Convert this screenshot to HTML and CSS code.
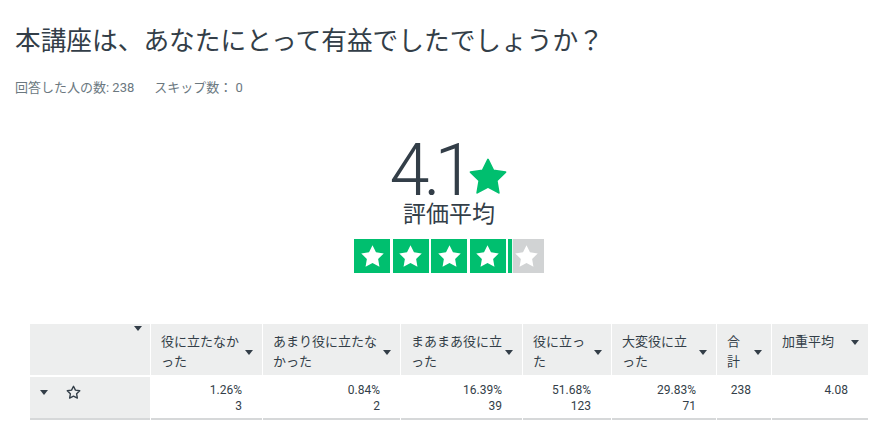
FILE: index.html
```html
<!DOCTYPE html>
<html lang="ja">
<head>
    <meta charset="UTF-8">
    <meta name="viewport" content="width=device-width, initial-scale=1.0">
    <title>評価の結果</title>
    <link rel="stylesheet" href="styles.css">
</head>
<body>
    <div class="page">
        <h1 class="question">本講座は、あなたにとって有益でしたでしょうか？</h1>
        <p class="meta"><span>回答した人の数: 238</span><span>スキップ数： 0</span></p>

        <div class="rating">
            <div class="score">
                <span class="score-value">4.1</span>
                <svg class="score-star" viewBox="0 0 24 24"><polygon points="12,2 15.09,8.26 22,9.27 17,14.14 18.18,21.02 12,17.77 5.82,21.02 7,14.14 2,9.27 8.91,8.26"/></svg>
            </div>
            <div class="score-label">評価平均</div>
            <div class="stars">
                <div class="star-box"><svg viewBox="0 0 24 24"><polygon points="12,2 15.09,8.26 22,9.27 17,14.14 18.18,21.02 12,17.77 5.82,21.02 7,14.14 2,9.27 8.91,8.26"/></svg></div>
                <div class="star-box"><svg viewBox="0 0 24 24"><polygon points="12,2 15.09,8.26 22,9.27 17,14.14 18.18,21.02 12,17.77 5.82,21.02 7,14.14 2,9.27 8.91,8.26"/></svg></div>
                <div class="star-box"><svg viewBox="0 0 24 24"><polygon points="12,2 15.09,8.26 22,9.27 17,14.14 18.18,21.02 12,17.77 5.82,21.02 7,14.14 2,9.27 8.91,8.26"/></svg></div>
                <div class="star-box"><svg viewBox="0 0 24 24"><polygon points="12,2 15.09,8.26 22,9.27 17,14.14 18.18,21.02 12,17.77 5.82,21.02 7,14.14 2,9.27 8.91,8.26"/></svg></div>
                <div class="star-box partial" style="--fill: 10%"><svg viewBox="0 0 24 24"><polygon points="12,2 15.09,8.26 22,9.27 17,14.14 18.18,21.02 12,17.77 5.82,21.02 7,14.14 2,9.27 8.91,8.26"/></svg></div>
            </div>
        </div>

        <table class="results">
            <colgroup>
                <col class="w-label">
                <col class="w-1">
                <col class="w-2">
                <col class="w-3">
                <col class="w-4">
                <col class="w-5">
                <col class="w-total">
                <col class="w-avg">
            </colgroup>
            <thead>
                <tr>
                    <th class="corner"><span class="caret"></span></th>
                    <th><div class="head"><span class="head-text">役に立たなかった</span><span class="caret"></span></div></th>
                    <th><div class="head"><span class="head-text">あまり役に立たなかった</span><span class="caret"></span></div></th>
                    <th><div class="head"><span class="head-text">まあまあ役に立った</span><span class="caret"></span></div></th>
                    <th><div class="head"><span class="head-text">役に立った</span><span class="caret"></span></div></th>
                    <th><div class="head"><span class="head-text">大変役に立った</span><span class="caret"></span></div></th>
                    <th><div class="head"><span class="head-text">合計</span><span class="caret"></span></div></th>
                    <th><div class="head"><span class="head-text">加重平均</span><span class="caret"></span></div></th>
                </tr>
            </thead>
            <tbody>
                <tr>
                    <td class="row-label">
                        <span class="caret"></span>
                        <svg class="outline-star" viewBox="0 0 24 24"><polygon points="12,2 15.09,8.26 22,9.27 17,14.14 18.18,21.02 12,17.77 5.82,21.02 7,14.14 2,9.27 8.91,8.26"/></svg>
                    </td>
                    <td>1.26%<br>3</td>
                    <td>0.84%<br>2</td>
                    <td>16.39%<br>39</td>
                    <td>51.68%<br>123</td>
                    <td>29.83%<br>71</td>
                    <td>238</td>
                    <td>4.08</td>
                </tr>
            </tbody>
        </table>
    </div>
</body>
</html>
```

FILE: styles.css
```css
body {
    margin: 0;
    font-family: Roboto, "Noto Sans CJK JP", sans-serif;
    color: #333e48;
    background: #fff;
}

.page {
    padding: 24px 15px 0;
}

.question {
    margin: 0;
    font-size: 25.7px;
    line-height: 34px;
    font-weight: normal;
    color: #333e48;
}

.meta {
    margin: 21px 0 0;
    font-size: 13px;
    line-height: 18px;
    color: #6b787f;
    display: flex;
    gap: 20px;
}

.rating {
    margin: 44px 0 0 14px;
    width: 840px;
    display: flex;
    flex-direction: column;
    align-items: center;
}

.score {
    display: flex;
    align-items: flex-end;
    height: 60px;
}

.score-value {
    font-size: 72px;
    line-height: 60px;
    font-weight: 300;
    letter-spacing: -6px;
    color: #333e48;
}

.score-star {
    width: 42px;
    height: 42px;
    margin: 0 0 3px -2px;
    fill: #00bf6f;
    stroke: #00bf6f;
    stroke-width: 1;
    stroke-linejoin: round;
}

.score-label {
    font-size: 23px;
    line-height: 28px;
    color: #333e48;
}

.stars {
    display: flex;
    gap: 2.5px;
    margin-top: 10px;
}

.star-box {
    width: 36px;
    height: 34px;
    background: #00bf6f;
    display: flex;
    align-items: center;
    justify-content: center;
}

.star-box.partial {
    background: linear-gradient(to right, #00bf6f 0 var(--fill), #e9f7f0 var(--fill) calc(var(--fill) + 1px), #d1d3d4 calc(var(--fill) + 1px));
}

.star-box svg {
    width: 27px;
    height: 27px;
    fill: #fff;
}

.results {
    margin: 51px 0 0 14px;
    width: 840px;
    table-layout: fixed;
    border-collapse: separate;
    border-spacing: 1px 0;
    font-size: 13px;
}

.w-label { width: 120px; }
.w-1 { width: 111px; }
.w-2 { width: 137px; }
.w-3 { width: 121px; }
.w-4 { width: 88px; }
.w-5 { width: 104px; }
.w-total { width: 54px; }
.w-avg { width: 96px; }

.results th {
    background: #edeeee;
    font-weight: normal;
    text-align: left;
    vertical-align: top;
    padding: 8px 9px 3px 10px;
    height: 40px;
}

.results th.corner {
    padding: 2px 8px 0 0;
    text-align: right;
}

.head {
    display: flex;
    align-items: center;
}

.head-text {
    flex: 1;
    line-height: 20px;
    line-break: loose;
    word-break: break-all;
}

.caret {
    display: inline-block;
    flex-shrink: 0;
    margin-left: 2px;
    border-left: 4px solid transparent;
    border-right: 4px solid transparent;
    border-top: 5px solid #333e48;
}

.corner .caret {
    vertical-align: top;
}

.results td {
    border-top: 2px solid #fff;
    border-bottom: 2px solid #d6d8d9;
    padding: 5px 20px 4px 0;
    text-align: right;
    vertical-align: top;
    font-size: 12px;
    line-height: 16px;
    color: #333e48;
}

.results td.row-label {
    background: #edeeee;
    text-align: left;
    padding: 7px 0 0 10px;
}

.row-label .caret {
    margin: 0;
    vertical-align: middle;
}

.outline-star {
    width: 15px;
    height: 15px;
    margin-left: 15px;
    vertical-align: middle;
    fill: none;
    stroke: #333e48;
    stroke-width: 2.2;
    stroke-linejoin: round;
}
```
